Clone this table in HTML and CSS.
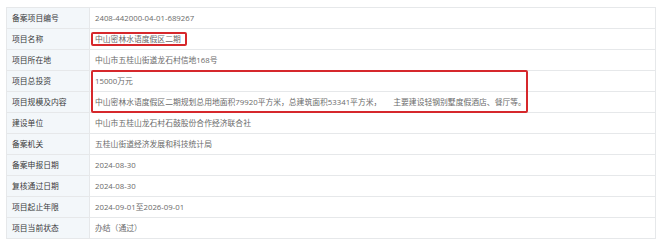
FILE: index.html
```html
<!DOCTYPE html>
<html lang="zh-CN">
<head>
<meta charset="utf-8">
<link rel="stylesheet" href="styles.css">
</head>
<body>
<div class="wrap">
  <table class="info">
    <tr><th>备案项目编号</th><td>2408-442000-04-01-689267</td></tr>
    <tr><th>项目名称</th><td>中山密林水语度假区二期</td></tr>
    <tr><th>项目所在地</th><td>中山市五桂山街道龙石村信地168号</td></tr>
    <tr><th>项目总投资</th><td>15000万元</td></tr>
    <tr><th>项目规模及内容</th><td>中山密林水语度假区二期规划总用地面积79920平方米，总建筑面积53341平方米，<span class="gap"></span>主要建设轻钢别墅度假酒店、餐厅等。</td></tr>
    <tr><th>建设单位</th><td>中山市五桂山龙石村石鼓股份合作经济联合社</td></tr>
    <tr><th>备案机关</th><td>五桂山街道经济发展和科技统计局</td></tr>
    <tr><th>备案申报日期</th><td>2024-08-30</td></tr>
    <tr><th>复核通过日期</th><td>2024-08-30</td></tr>
    <tr><th>项目起止年限</th><td>2024-09-01至2026-09-01</td></tr>
    <tr><th>项目当前状态</th><td>办结（通过）</td></tr>
  </table>
  <div class="mark mark-name"></div>
  <div class="mark mark-invest"></div>
</div>
</body>
</html>
```
FILE: styles.css
```css
html, body {
  margin: 0;
  padding: 0;
  background: #ffffff;
}
.wrap {
  position: relative;
  padding: 7px 0 0 6px;
  width: 650px;
}
.info {
  width: 650px;
  border-collapse: collapse;
  font-family: "Open Sans", "Noto Sans CJK SC", sans-serif;
  font-size: 7.8px;
  table-layout: fixed;
}
.info th, .info td {
  border: 1px solid #e6e8ea;
  height: 20px;
  padding: 0 0 0 5px;
  text-align: left;
  white-space: nowrap;
  line-height: 20px;
}
.info th {
  width: 77px;
  background: #f3f7fa;
  color: #3a3a3a;
  font-weight: normal;
}
.info td {
  color: #6a6a6a;
  background: #fff;
}
.gap {
  display: inline-block;
  width: 12px;
}
.mark {
  position: absolute;
  border: 2px solid #d6282c;
  border-radius: 2px;
  box-sizing: border-box;
}
.mark-name {
  left: 91px;
  top: 32px;
  width: 96px;
  height: 14px;
}
.mark-invest {
  left: 91px;
  top: 70px;
  width: 437px;
  height: 43px;
}
```
